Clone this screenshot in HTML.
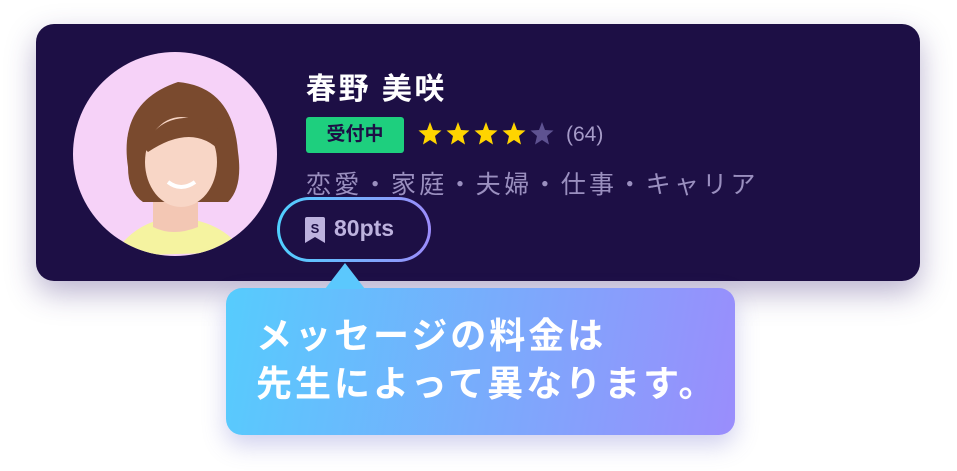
<!DOCTYPE html>
<html><head><meta charset="utf-8"><style>
body{margin:0;width:957px;height:471px;background:#fff;position:relative;overflow:hidden;font-family:"Liberation Sans","Noto Sans CJK JP",sans-serif}
.card{position:absolute;left:36px;top:24px;width:884px;height:257px;background:#1d0f45;border-radius:18px;box-shadow:0 12px 30px rgba(60,40,120,.35)}
.av{position:absolute;left:73px;top:52px;width:204px;height:204px;border-radius:50%;overflow:hidden;background:#f6d2f8}
.name{position:absolute;left:306px;top:64px;font-size:30px;font-weight:bold;color:#fff;letter-spacing:2.5px}
.badge{position:absolute;left:306px;top:117px;width:98px;height:36px;background:#1ecf7e;border-radius:3px;color:#1d0f45;font-weight:bold;font-size:19px;text-align:center;line-height:36px}
.star{position:absolute;top:121px}
.cnt{position:absolute;left:566px;top:123px;font-size:21px;color:#a69bc8}
.tags{position:absolute;left:306px;top:165px;font-size:25px;color:#9a8fbf;letter-spacing:3.3px;white-space:nowrap}
.pill{position:absolute;left:277px;top:197px;width:154px;height:65px;border-radius:33px;background:linear-gradient(90deg,#4fd0ff,#9c8cfb);}
.pill .in{position:absolute;left:3px;top:3px;right:3px;bottom:3px;border-radius:30px;background:#1d0f45}
.pts{position:absolute;left:334px;top:215px;font-size:23px;color:#bdb2de;font-weight:bold}
.tip{position:absolute;left:226px;top:288px;width:509px;height:147px;border-radius:16px;background:linear-gradient(100deg,#56ccfd,#9a8dfc);box-shadow:0 10px 24px rgba(100,100,200,.3)}
.arrow{position:absolute;left:325px;top:263px;width:0;height:0;border-left:20px solid transparent;border-right:20px solid transparent;border-bottom:26px solid #5bc8fd}
.tt{position:absolute;left:256px;top:312px;color:#fff;font-weight:bold;font-size:36px;line-height:48px;letter-spacing:3px;white-space:nowrap}
</style></head><body>
<div class="card"></div>
<div class="av"><svg width="204" height="204" viewBox="0 0 204 204">
<path d="M40 204 Q60 170 100 165 Q150 168 170 200 Z" fill="#f5f3a0"/>
<path d="M80 145 L80 175 Q100 185 125 175 L125 145Z" fill="#f3c7b4"/>
<path d="M55 115 Q45 50 105 30 Q160 35 165 100 Q170 135 155 150 Q110 150 70 150 Q55 140 55 115Z" fill="#7a4a2e"/>
<ellipse cx="108" cy="110" rx="36" ry="45" fill="#f8d6c6"/>
<path d="M70 95 Q90 55 140 70 Q150 80 148 100 Q120 70 75 100Z" fill="#7a4a2e"/>
<path d="M95 130 Q108 140 122 130" stroke="#fff" stroke-width="4" fill="none"/>
</svg></div>
<div class="name">春野 美咲</div>
<div class="badge">受付中</div>
<svg class="star" style="left:418px" width="140" height="26" viewBox="0 0 140 26">
<defs><path id="s" d="M12 1 L15 9 L23.5 9.5 L17 15 L19 23.5 L12 19 L5 23.5 L7 15 L0.5 9.5 L9 9Z"/></defs>
<use href="#s" fill="#ffd400"/><use href="#s" x="28" fill="#ffd400"/><use href="#s" x="56" fill="#ffd400"/><use href="#s" x="84" fill="#ffd400"/><use href="#s" x="112" fill="#5e5291"/>
</svg>
<div class="cnt">(64)</div>
<div class="tags">恋愛・家庭・夫婦・仕事・キャリア</div>
<div class="pill"><div class="in"></div></div>
<svg style="position:absolute;left:305px;top:217px" width="20" height="26" viewBox="0 0 20 26"><path d="M0 2 Q0 0 2 0 H18 Q20 0 20 2 V26 L10 20 L0 26Z" fill="#bdb2de"/><text x="10" y="16" font-size="13" font-weight="bold" text-anchor="middle" fill="#1d0f45" font-family="Liberation Sans">S</text></svg>
<div class="pts">80pts</div>
<div class="tip"></div>
<div class="arrow"></div>
<div class="tt">メッセージの料金は<br>先生によって異なります。</div>
</body></html>
